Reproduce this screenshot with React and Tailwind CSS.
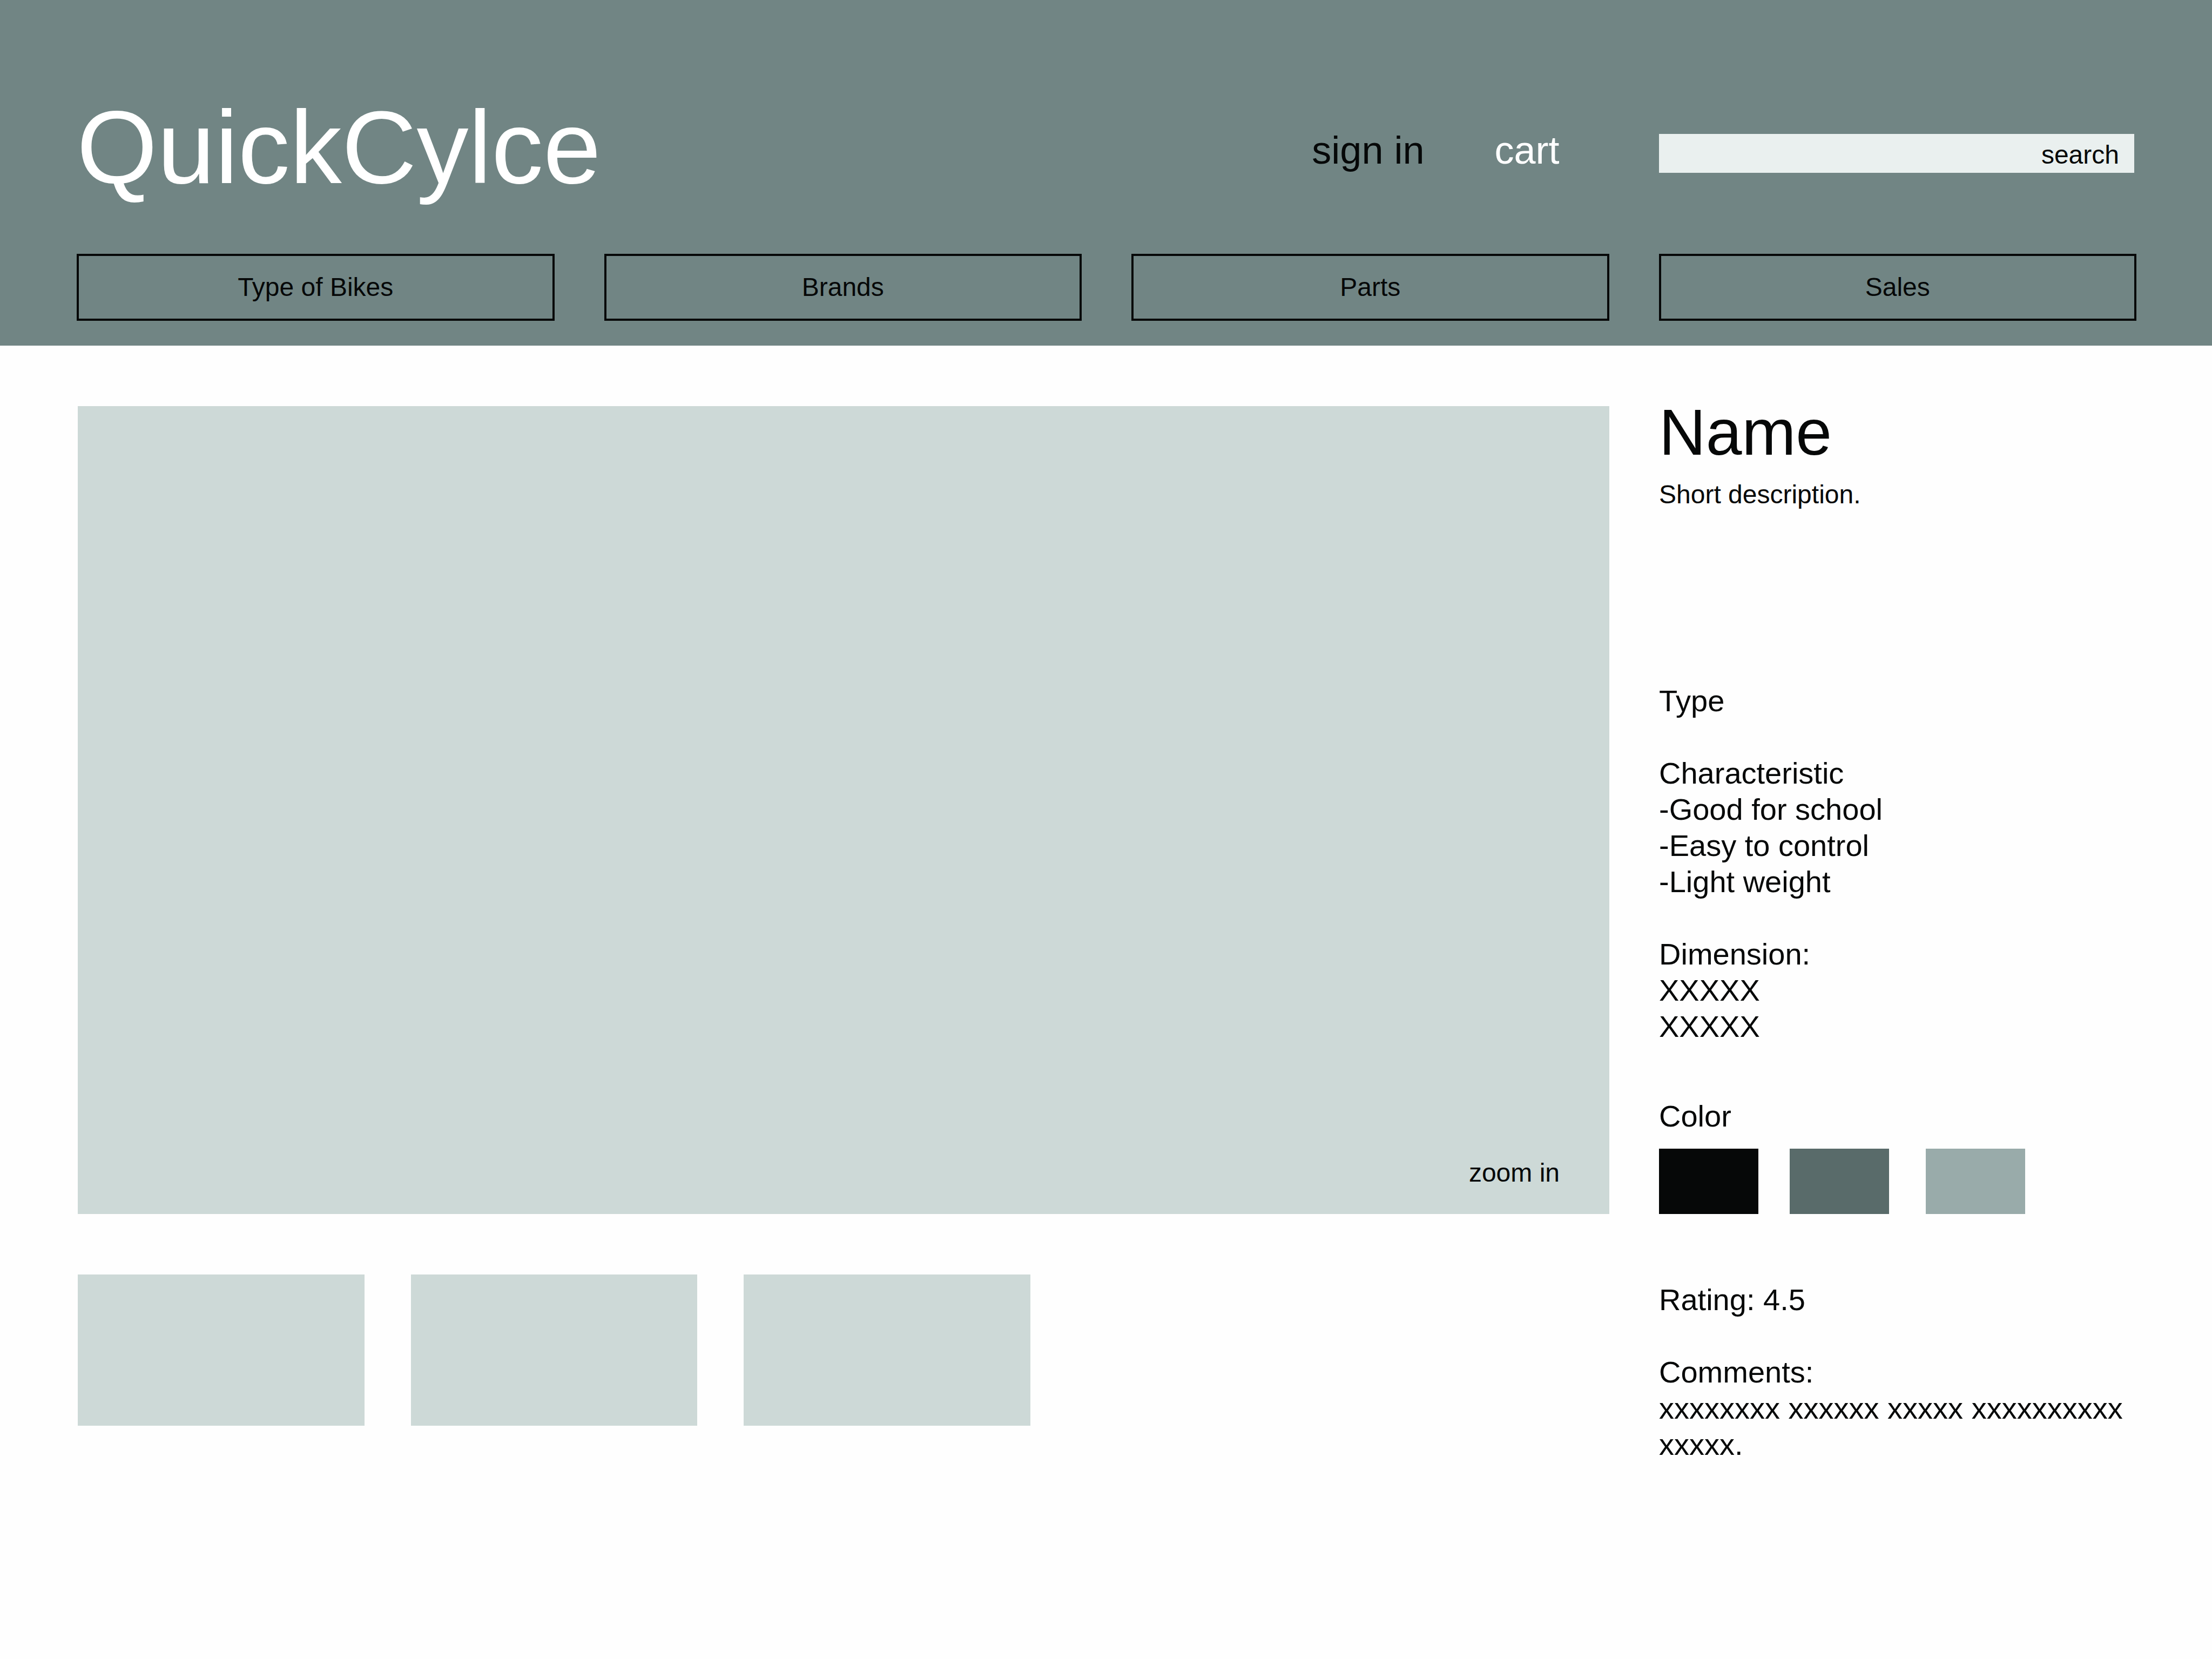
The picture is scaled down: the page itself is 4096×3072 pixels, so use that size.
const categories = ["Type of Bikes", "Brands", "Parts", "Sales"];

const characteristics = ["-Good for school", "-Easy to control", "-Light weight"];

const dimensions = ["XXXXX", "XXXXX"];

const colors = [
  { name: "Black", className: "bg-[#060808]" },
  { name: "Slate", className: "bg-[#596b6a]" },
  { name: "Mist", className: "bg-[#99abaa]" },
];

const views = ["View 1", "View 2", "View 3"];

function Header() {
  return (
    <header className="bg-[#718584] pt-[177px] pr-[140px] pb-[46px] pl-[142px]">
      <div className="grid grid-cols-4 items-start gap-[92px]">
        <h1 className="col-span-2 text-[192px] leading-[192px] text-white">QuickCylce</h1>
        <div className="mt-[65px] flex justify-end gap-[130px] pr-[92px] text-[72px] leading-[72px] whitespace-nowrap">
          <a href="#sign-in">sign in</a>
          <a href="#cart" className="text-white">
            cart
          </a>
        </div>
        <form role="search" className="mt-[71px] mr-[4px] flex">
          <input
            type="text"
            aria-label="search"
            placeholder="search"
            className="h-[72px] w-full min-w-0 appearance-none bg-[#eaf0ef] pt-[4px] pr-[28px] text-right text-[48px] leading-[58px] outline-none placeholder:text-[#060808] placeholder:opacity-100"
          />
        </form>
      </div>
      <nav className="mt-[101px] grid grid-cols-4 gap-[92px]">
        {categories.map((category) => (
          <button
            key={category}
            type="button"
            className="h-[124px] border-4 border-[#060808] text-[48px] leading-[58px]"
          >
            {category}
          </button>
        ))}
      </nav>
    </header>
  );
}

function Gallery() {
  return (
    <section aria-label="Pictures" className="col-span-3 mt-[12px]">
      <div className="flex aspect-[709/374] items-end justify-end bg-[#cdd9d7] pr-[92px] pb-[47px]">
        <button type="button" className="text-[48px] leading-[58px]">
          zoom in
        </button>
      </div>
      <div className="mt-[112px] grid w-[62.2%] grid-cols-3 gap-[86px]">
        {views.map((view) => (
          <button key={view} type="button" aria-label={view} className="aspect-[531/280] bg-[#cdd9d7]" />
        ))}
      </div>
    </section>
  );
}

function Details() {
  return (
    <section aria-label="Details" className="text-[56px] leading-[67px]">
      <h2 className="text-[120px] leading-[120px]">Name</h2>
      <p className="mt-[27px] text-[48px] leading-[58px]">Short description.</p>

      <div className="mt-[319px] flex flex-col gap-[67px]">
        <p>Type</p>
        <div>
          <h3>Characteristic</h3>
          <ul>
            {characteristics.map((item) => (
              <li key={item}>{item}</li>
            ))}
          </ul>
        </div>
        <div>
          <h3>Dimension:</h3>
          {dimensions.map((value, index) => (
            <p key={index}>{value}</p>
          ))}
        </div>
      </div>

      <fieldset className="mt-[99px]">
        <legend>Color</legend>
        <div className="mt-[27px] grid grid-cols-[242px_252px_184px]">
          {colors.map((color) => (
            <input
              key={color.name}
              type="radio"
              name="color"
              aria-label={color.name}
              className={`h-[121px] w-[184px] appearance-none ${color.className}`}
            />
          ))}
        </div>
      </fieldset>

      <div className="mt-[125px] flex flex-col gap-[67px]">
        <p>Rating: 4.5</p>
        <div>
          <h3>Comments:</h3>
          <p>xxxxxxxx xxxxxx xxxxx xxxxxxxxxx xxxxx.</p>
        </div>
      </div>
    </section>
  );
}

export default function App() {
  return (
    <div className="min-h-screen bg-[#fefefe] font-['Liberation_Sans',Arial,sans-serif] text-[#060808]">
      <Header />
      <main className="grid grid-cols-4 items-start gap-[92px] pt-[100px] pr-[140px] pb-[100px] pl-[144px]">
        <Gallery />
        <Details />
      </main>
    </div>
  );
}
